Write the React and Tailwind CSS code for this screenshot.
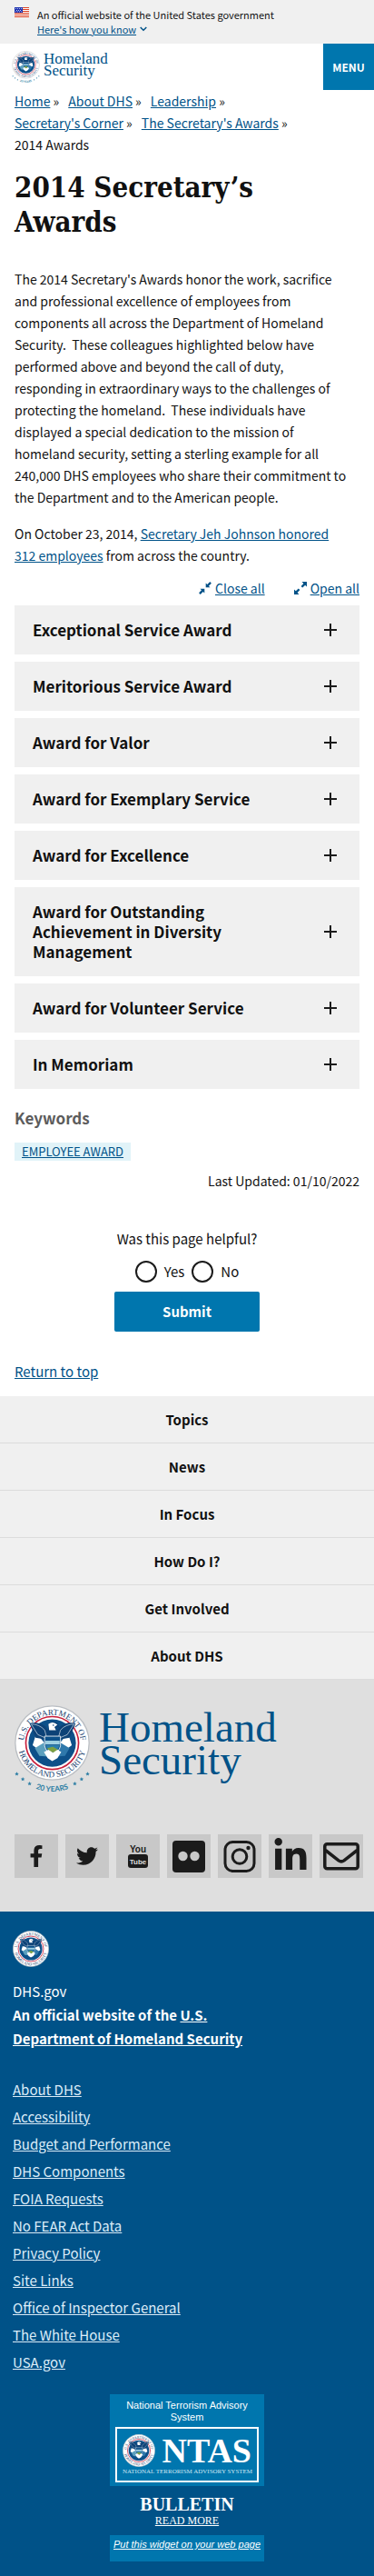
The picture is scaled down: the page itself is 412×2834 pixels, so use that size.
import { useId } from 'react';
import { FaFacebookF, FaTwitter, FaLinkedinIn } from 'react-icons/fa';

const crumbs = ['Home', 'About DHS', 'Leadership', "Secretary's Corner", "The Secretary's Awards"];

const awards = [
  'Exceptional Service Award',
  'Meritorious Service Award',
  'Award for Valor',
  'Award for Exemplary Service',
  'Award for Excellence',
  'Award for Outstanding Achievement in Diversity Management',
  'Award for Volunteer Service',
  'In Memoriam',
];

const footerNav = ['Topics', 'News', 'In Focus', 'How Do I?', 'Get Involved', 'About DHS'];

const footerLinks = [
  'About DHS',
  'Accessibility',
  'Budget and Performance',
  'DHS Components',
  'FOIA Requests',
  'No FEAR Act Data',
  'Privacy Policy',
  'Site Links',
  'Office of Inspector General',
  'The White House',
  'USA.gov',
];

function Seal({ years = false, className }) {
  const id = useId();
  const star = 'M0-2.8 .8-.9 2.8-.8 1.2 .4 1.7 2.4 0 1.3-1.7 2.4-1.2 .4-2.8-.8-.8-.9Z';
  return (
    <svg viewBox={years ? '0 0 100 118' : '0 0 100 100'} className={className} aria-hidden="true">
      <defs>
        <path id={id + 't'} d="M12.5 57A38 38 0 1 1 87.500 57" />
        <path id={id + 'b'} d="M4.500 50A45.500 45.500 0 0 0 95.500 50" />
        <path id={id + 'y'} d="M14 103A62 62 0 0 0 86 103" />
      </defs>
      <circle cx="50" cy="50" r="49" fill="#fff" stroke="#b9bdc2" strokeWidth="1.500" />
      <circle cx="50" cy="50" r="35" fill="#fff" stroke="#c8203c" strokeWidth="2" />
      <circle cx="50" cy="50" r="31.500" fill="#0d5089" />
      <path d="M29 37 44 55 41 66 24 53Z M71 37 56 55 59 66 76 53Z" fill="#fff" />
      <path d="M27 57 40 49 45 68 33 67Z" fill="#5b9fbe" />
      <path d="M73 57 60 49 55 68 67 67Z" fill="#2f78ab" />
      <path d="M20 24Q31 21 41 28Q43 32 45 33L45 27Q46 22 51 22Q57 22 58 26L60 30L56 29L56 33Q58 31 61 28Q70 21 81 24L73 43L61 45L59 43H42L40 45L28 43Z" fill="#0d4277" />
      <path d="M22 25Q33 25 40 33L43 44L31 39Z M79 25Q68 25 61 33L58 44L70 39Z" fill="#0d4277" stroke="#fff" strokeWidth=".7" />
      <path d="M45 25Q51 20 57 26L53 29L55 33H46Z" fill="#fff" />
      <circle cx="51.500" cy="26.500" r="1" fill="#0d4277" />
      <path d="M40 41H61V54Q59 62 50.500 67Q42 62 40 54Z" fill="#0d5089" stroke="#fff" strokeWidth="1" />
      <path d="M41 47H60V52H41Z" fill="#9fd0e2" />
      <path d="M41 53H60L57 59H44Z" fill="#2c7eac" />
      <path d="M43 57 51 55 58 59 55 63 48 62Z" fill="#7da143" />
      <path d="M39 62 45 59 51 63 57 59 62 62 57 70 50 74 44 70Z" fill="#fff" />
      <g fill="#17426f" fontFamily="Liberation Serif, serif" fontSize="11">
        <text textAnchor="middle">
          <textPath href={'#' + id + 't'} startOffset="50%">U.S. DEPARTMENT OF</textPath>
        </text>
        <text textAnchor="middle">
          <textPath href={'#' + id + 'b'} startOffset="50%">HOMELAND SECURITY</textPath>
        </text>
      </g>
      {years && (
        <g fill="#2f7fa5">
          <text textAnchor="middle" fontFamily="Lato, sans-serif" fontWeight="700" fontSize="10">
            <textPath href={'#' + id + 'y'} startOffset="50%">20 YEARS</textPath>
          </text>
          {[[3, 91], [11, 98], [20, 104], [80, 104], [89, 98], [97, 91]].map(([x, y]) => (
            <path key={x} d={star} transform={`translate(${x} ${y})`} />
          ))}
        </g>
      )}
    </svg>
  );
}

function Flag() {
  return (
    <svg viewBox="0 0 16 11" className="mt-2 h-[11px] w-4 shrink-0" aria-hidden="true">
      <path fill="#fff" d="M0 0h16v11H0z" />
      <path fill="#db3e1f" d="M0 0h16v1H0zM0 2h16v1H0zM0 4h16v1H0zM0 6h16v1H0zM0 8h16v1H0zM0 10h16v1H0z" />
      <path fill="#1e33b1" d="M0 0h9v6H0z" />
      <path stroke="#b8c0ea" strokeDasharray="1 1" d="M1 1.500h7M2 3.500h6M1 5h7" />
    </svg>
  );
}

function Chevron() {
  return (
    <svg viewBox="0 0 8 6" className="h-1.5 w-2" fill="none" stroke="#005288" strokeWidth="1.500" aria-hidden="true">
      <path d="M.7 1 4 4.300 7.300 1" />
    </svg>
  );
}

function CloseIcon() {
  return (
    <svg viewBox="0 0 14 14" className="size-3.5" fill="#005288" aria-hidden="true">
      <path d="M7.700 1.500 9.300 3 12.300.1 13.900 1.700 10.900 4.700 12.500 6.300H7.700ZM6.300 12.500 4.700 11 1.700 13.900.1 12.300 3 9.300 1.500 7.700H6.300Z" />
    </svg>
  );
}

function OpenIcon() {
  return (
    <svg viewBox="0 0 14 14" className="size-3.5" fill="#005288" aria-hidden="true">
      <path d="M8.500 0H14V5.500L12.200 3.700 9.200 6.600 7.600 5 10.400 1.900ZM5.500 14H0V8.500L1.800 10.300 4.800 7.400 6.400 9 3.600 12.100Z" />
    </svg>
  );
}

function YouTubeIcon() {
  return (
    <svg viewBox="0 0 24 28" className="h-7 w-6 overflow-visible" aria-hidden="true">
      <g fontFamily="Liberation Sans, sans-serif" textAnchor="middle">
        <text x="12" y="10" fontSize="10" fontWeight="700" fill="#1b1b1b">You</text>
        <rect x="1" y="12" width="22" height="15" rx="3" fill="#1b1b1b" />
        <text x="12" y="23" fontSize="8" fontWeight="700" fill="#dfdfdf">Tube</text>
      </g>
    </svg>
  );
}

function FlickrIcon() {
  return (
    <svg viewBox="0 0 36 36" className="size-9" aria-hidden="true">
      <rect x="0" y="1" width="36" height="35" rx="4" fill="#1b1b1b" />
      <circle cx="11.500" cy="18" r="5.200" fill="#c8c8c8" />
      <circle cx="24.500" cy="18" r="5.200" fill="#c8c8c8" />
    </svg>
  );
}

function InstagramIcon() {
  return (
    <svg viewBox="0 0 36 36" className="size-9" fill="none" stroke="#1b1b1b" strokeWidth="3" aria-hidden="true">
      <rect x="2" y="2.500" width="32" height="32" rx="8.500" />
      <circle cx="18" cy="18.500" r="7.800" />
      <circle cx="27.500" cy="9" r="2.200" fill="#1b1b1b" stroke="none" />
    </svg>
  );
}

function MailIcon() {
  return (
    <svg viewBox="0 0 40 32" className="h-8 w-10" fill="none" stroke="#1b1b1b" strokeWidth="3.500" aria-hidden="true">
      <rect x="1.800" y="2.800" width="36.400" height="27" rx="2.500" />
      <path d="M2.500 9.500 17 20.800Q20 23 23 20.800L37.500 9.500" />
    </svg>
  );
}

const social = [
  ['Facebook', <FaFacebookF className="size-6" />],
  ['Twitter', <FaTwitter className="size-6" />],
  ['YouTube', <YouTubeIcon />],
  ['Flickr', <FlickrIcon />],
  ['Instagram', <InstagramIcon />],
  ['LinkedIn', <FaLinkedinIn className="size-10" />],
  ['Email', <MailIcon />],
];

export default function App() {
  return (
    <div className="bg-white font-['Noto_Sans_CJK_SC',sans-serif] text-sm text-[#111111]">
      <section className="flex gap-[9px] bg-[#f0f0f0] px-4 pb-2" aria-label="Official government website">
        <Flag />
        <div className="pt-2 text-[11px] leading-4">
          <p>An official website of the United States government</p>
          <button type="button" className="flex items-center gap-1 text-[#005288]">
            <span className="underline">Here's how you know</span>
            <Chevron />
          </button>
        </div>
      </section>

      <header className="flex h-[51px] items-start justify-between">
        <a href="#" className="flex items-start gap-1 pt-2 pl-[13px] text-[#005288]">
          <Seal years className="h-9 w-[31px]" />
          <span className="pt-0.5 font-['Liberation_Serif',serif] text-[17px] leading-[13px]">
            Homeland
            <br />
            Security
          </span>
        </a>
        <button type="button" className="h-full w-14 bg-[#0076ae] text-xs font-bold text-white">MENU</button>
      </header>

      <main className="px-4">
        <nav aria-label="Breadcrumb">
          <ol className="flex flex-wrap gap-x-2.5 pr-8 leading-6">
            {crumbs.map((c) => (
              <li key={c}>
                <a href="#" className="text-[#005288] underline">{c}</a> »
              </li>
            ))}
            <li className="w-full">2014 Awards</li>
          </ol>
        </nav>

        <h1 className="mt-4 font-['DejaVu_Serif_Condensed','DejaVu_Serif',serif] text-[31px] leading-[38px] font-bold">
          2014 Secretary’s Awards
        </h1>

        <p className="mt-8 pr-2 leading-6">
          The 2014 Secretary's Awards honor the work, sacrifice and professional excellence of employees from
          components all across the Department of Homeland Security.&nbsp; These colleagues highlighted below have
          performed above and beyond the call of duty, responding in extraordinary ways to the challenges of
          protecting the homeland.&nbsp; These individuals have displayed a special dedication to the mission of
          homeland security, setting a sterling example for all 240,000 DHS employees who share their commitment to
          the Department and to the American people.
        </p>
        <p className="mt-4 leading-6">
          On October 23, 2014,{' '}
          <a href="#" className="text-[#005288] underline">Secretary Jeh Johnson honored 312&nbsp;employees</a> from
          across the country.
        </p>

        <div className="mt-3 flex justify-end gap-8 leading-6 text-[#005288]">
          <button type="button" className="flex items-center gap-1">
            <CloseIcon />
            <span className="underline">Close all</span>
          </button>
          <button type="button" className="flex items-center gap-1">
            <OpenIcon />
            <span className="underline">Open all</span>
          </button>
        </div>

        <div className="mt-[7px] flex flex-col gap-2">
          {awards.map((a) => (
            <h4 key={a}>
              <button
                type="button"
                aria-expanded="false"
                className="flex w-full items-center justify-between gap-16 bg-[#f0f0f0] py-4 pr-6 pl-5 text-left text-[17px] leading-[22px] font-bold"
              >
                {a}
                <svg viewBox="0 0 16 16" className="size-4 shrink-0" stroke="#1b1b1b" strokeWidth="2" aria-hidden="true">
                  <path d="M1 8H15M8 1V15" />
                </svg>
              </button>
            </h4>
          ))}
        </div>

        <h2 className="mt-5 text-[17px] leading-6 font-bold text-[#5c5c5c]">Keywords</h2>
        <div className="mt-[15px] flex">
          <a href="#" className="bg-[#e1f3f8] px-2 text-[13px] leading-5 text-[#005288] underline">EMPLOYEE AWARD</a>
        </div>
        <p className="mt-2.5 text-right leading-6">Last Updated: 01/10/2022</p>

        <form className="mt-10 flex flex-col items-center text-[15px]" onSubmit={(e) => e.preventDefault()}>
          <fieldset>
            <legend className="text-center leading-6">Was this page helpful?</legend>
            <div className="mt-3 flex justify-center gap-2">
              {['Yes', 'No'].map((o) => (
                <label key={o} className="flex items-center gap-2 leading-6">
                  <input
                    type="radio"
                    name="helpful"
                    value={o}
                    className="size-6 appearance-none rounded-full border-2 border-[#1b1b1b] bg-white checked:bg-[#0076ae]"
                  />
                  {o}
                </label>
              ))}
            </div>
          </fieldset>
          <button type="submit" className="mt-2.5 h-11 w-40 rounded-xs bg-[#0076ae] font-bold text-white">
            Submit
          </button>
        </form>

        <p className="mt-8 leading-6">
          <a href="#" className="text-[15px] text-[#005288] underline">Return to top</a>
        </p>
      </main>

      <footer className="mt-[15px]">
        <nav className="bg-[#f0f0f0]" aria-label="Footer">
          {footerNav.map((n) => (
            <a key={n} href="#" className="block border-b border-[#dcdcdc] pt-3.5 pb-[13px] text-center text-[15px] leading-6 font-bold">
              {n}
            </a>
          ))}
        </nav>

        <div className="bg-[#dfdfdf] px-4 pt-7 pb-[37px]">
          <a href="#" className="flex items-start gap-2.5 text-[#005288]">
            <Seal years className="h-[98px] w-[83px]" />
            <span className="pt-1.5 font-['Liberation_Serif',serif] text-[47px] leading-9">
              Homeland
              <br />
              Security
            </span>
          </a>
          <ul className="mt-11 flex gap-2">
            {social.map(([name, icon]) => (
              <li key={name}>
                <a href="#" aria-label={name} className="flex size-12 items-center justify-center bg-[#c8c8c8] text-[#1b1b1b]">
                  {icon}
                </a>
              </li>
            ))}
          </ul>
        </div>

        <div className="bg-[#005288] px-3.5 pt-[21px] pb-[17px] text-white">
          <Seal className="size-10" />
          <p className="mt-3.5 text-[15px] leading-[26px]">DHS.gov</p>
          <p className="max-w-72 text-[15px] leading-[26px] font-bold">
            An official website of the{' '}
            <a href="#" className="underline">U.S. Department of Homeland Security</a>
          </p>
          <ul className="mt-7 text-[15px] leading-[30px]">
            {footerLinks.map((l) => (
              <li key={l}>
                <a href="#" className="text-[#dcecf8] underline">{l}</a>
              </li>
            ))}
          </ul>

          <aside className="mx-auto mt-5 w-[170px] text-center">
            <div className="bg-[#0076ae] px-1.5 pt-1.5 pb-1 font-['Liberation_Sans',sans-serif] text-[11px] leading-[13px]">
              <p>National Terrorism Advisory System</p>
              <div className="mt-1 flex flex-col border-2 border-white px-1.5 pt-1.5 pb-1 font-['Liberation_Serif',serif]">
                <div className="flex items-center justify-between">
                  <Seal className="size-9" />
                  <span className="text-[38px] leading-9 font-bold">NTAS</span>
                </div>
                <span className="text-[7px] leading-[11px] whitespace-nowrap text-[#cfe6f3]">NATIONAL TERRORISM ADVISORY SYSTEM</span>
              </div>
            </div>
            <a href="#" className="block pt-2.5 pb-2 font-['Liberation_Serif',serif]">
              <span className="block text-xl leading-5 font-bold">BULLETIN</span>
              <span className="block text-xs leading-4 underline">READ MORE</span>
            </a>
            <a href="#" className="block h-[29px] bg-[#0076ae] pt-0.5 font-['Liberation_Sans',sans-serif] text-[11px] leading-4 italic underline">
              Put this widget on your web page
            </a>
          </aside>
        </div>
      </footer>
    </div>
  );
}
